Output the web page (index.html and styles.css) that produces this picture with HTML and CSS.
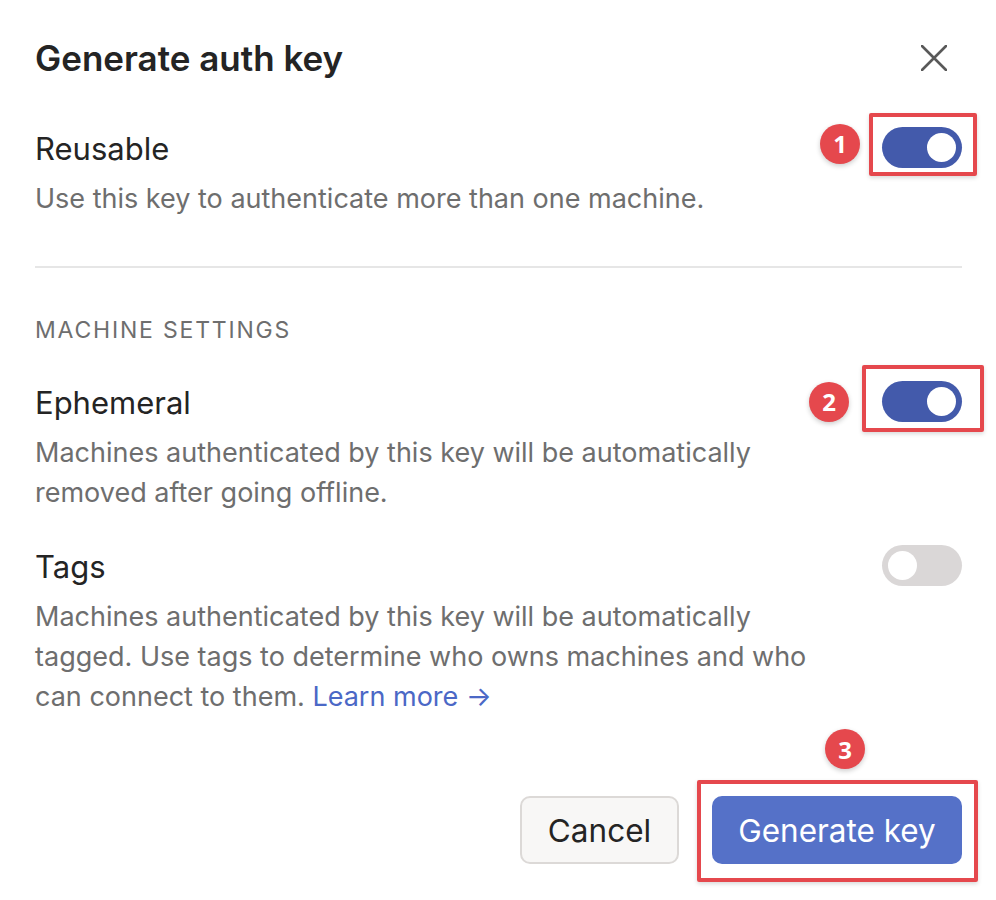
FILE: index.html
```html
<!DOCTYPE html>
<html>
<head>
<meta charset="utf-8">
<link rel="stylesheet" href="styles.css">
</head>
<body>
<div class="dialog">
  <div class="header">
    <h1 class="title">Generate auth key</h1>
    <button class="close" aria-label="Close">
      <svg width="26" height="26" viewBox="0 0 26 26"><path d="M1 1 L25 25 M25 1 L1 25" stroke="#595959" stroke-width="2.6" stroke-linecap="round" fill="none"/></svg>
    </button>
  </div>

  <div class="setting first">
    <div class="setting-head">
      <span class="label">Reusable</span>
      <span class="toggle-wrap">
        <span class="badge badge-1">1</span>
        <span class="hl hl-1"></span>
        <span class="toggle on"><span class="knob"></span></span>
      </span>
    </div>
    <p class="desc">Use this key to authenticate more than one machine.</p>
  </div>

  <hr class="divider">

  <div class="section-title">MACHINE SETTINGS</div>

  <div class="setting eph">
    <div class="setting-head">
      <span class="label">Ephemeral</span>
      <span class="toggle-wrap">
        <span class="badge badge-2">2</span>
        <span class="hl hl-2"></span>
        <span class="toggle on"><span class="knob"></span></span>
      </span>
    </div>
    <p class="desc">Machines authenticated by this key will be automatically removed after going offline.</p>
  </div>

  <div class="setting tags">
    <div class="setting-head">
      <span class="label">Tags</span>
      <span class="toggle-wrap">
        <span class="toggle off"><span class="knob"></span></span>
      </span>
    </div>
    <p class="desc">Machines authenticated by this key will be automatically tagged. Use tags to determine who owns machines and who can connect to them. <a class="link" href="#">Learn more →</a></p>
  </div>

  <div class="footer">
    <button class="btn btn-cancel">Cancel</button>
    <span class="primary-wrap">
      <span class="badge badge-3">3</span>
      <span class="hl hl-3"></span>
      <button class="btn btn-primary">Generate key</button>
    </span>
  </div>
</div>
</body>
</html>
```

FILE: styles.css
```css
* { box-sizing: border-box; }
html, body { margin: 0; padding: 0; background: #fff; }
body {
  font-family: Inter, "Noto Sans", "Liberation Sans", sans-serif;
  color: #1f1f1f;
  width: 996px;
  height: 900px;
  overflow: hidden;
}
.dialog {
  padding: 38px 34px 0 35px;
}
.header {
  display: flex;
  justify-content: space-between;
  align-items: center;
  height: 40px;
}
.title {
  margin: 0;
  font-size: 35px;
  font-weight: 600;
  line-height: 40px;
  color: #242424;
}
.close {
  border: 0;
  background: transparent;
  padding: 0;
  margin-right: 15px;
  width: 26px;
  height: 26px;
  display: flex;
}
.setting-head {
  display: flex;
  justify-content: space-between;
  align-items: center;
  height: 40px;
}
.label {
  font-size: 31px;
  line-height: 40px;
  font-weight: 400;
  color: #242424;
}
.desc {
  margin: 10px 0 0 0;
  font-size: 27px;
  line-height: 40px;
  color: #6e6e6e;
  max-width: 790px;
}
.first { margin-top: 51px; }
.divider {
  border: 0;
  border-top: 2px solid #e6e6e6;
  margin: 47px 0 0 0;
  height: 0;
}
.section-title {
  margin-top: 47px;
  font-size: 23px;
  line-height: 30px;
  letter-spacing: 1.8px;
  color: #6e6e6e;
}
.eph { margin-top: 38px; }
.tags { margin-top: 34px; }
.link { color: #4b68c6; text-decoration: none; }

.toggle-wrap {
  position: relative;
  display: flex;
  margin-top: -4px;
}
.toggle {
  width: 80px;
  height: 41px;
  border-radius: 21px;
  display: flex;
  align-items: center;
  padding: 0 6px;
}
.toggle.on { background: #435aab; justify-content: flex-end; }
.toggle.off { background: #dad7d7; justify-content: flex-start; }
.knob {
  width: 29px;
  height: 29px;
  border-radius: 50%;
  background: #fff;
}
.hl {
  position: absolute;
  border: 4px solid #e5484d;
  border-radius: 2px;
  box-shadow: 0 2px 4px rgba(0,0,0,0.15);
  pointer-events: none;
}
.hl-1 { left: -13px; right: -15px; top: -14px; bottom: -8px; }
.hl-2 { left: -20px; right: -22px; top: -16px; bottom: -10px; }
.hl-3 { left: -15px; right: -16px; top: -16px; bottom: -18px; }
.badge {
  position: absolute;
  width: 40px;
  height: 40px;
  border-radius: 50%;
  background: #e5484d;
  color: #fff;
  font-family: "Open Sans", "Liberation Sans", sans-serif;
  font-weight: 700;
  font-size: 24px;
  display: flex;
  align-items: center;
  justify-content: center;
  box-shadow: 0 2px 5px rgba(0,0,0,0.2);
}
.badge-1 { left: -62px; top: -3px; }
.badge-2 { left: -73px; top: 1px; }
.badge-3 { left: 113px; top: -67px; }

.footer {
  display: flex;
  justify-content: flex-end;
  gap: 33px;
  margin-top: 79px;
}
.primary-wrap { position: relative; display: flex; }
.btn {
  font-family: Inter, "Noto Sans", "Liberation Sans", sans-serif;
  font-size: 31.5px;
  height: 68px;
  border-radius: 10px;
  padding: 0;
  cursor: pointer;
}
.btn-cancel {
  width: 159px;
  background: #f8f7f6;
  border: 2px solid #dcd9d7;
  color: #242424;
}
.btn-primary {
  width: 250px;
  background: #5571c8;
  border: 0;
  color: #fff;
}
```
